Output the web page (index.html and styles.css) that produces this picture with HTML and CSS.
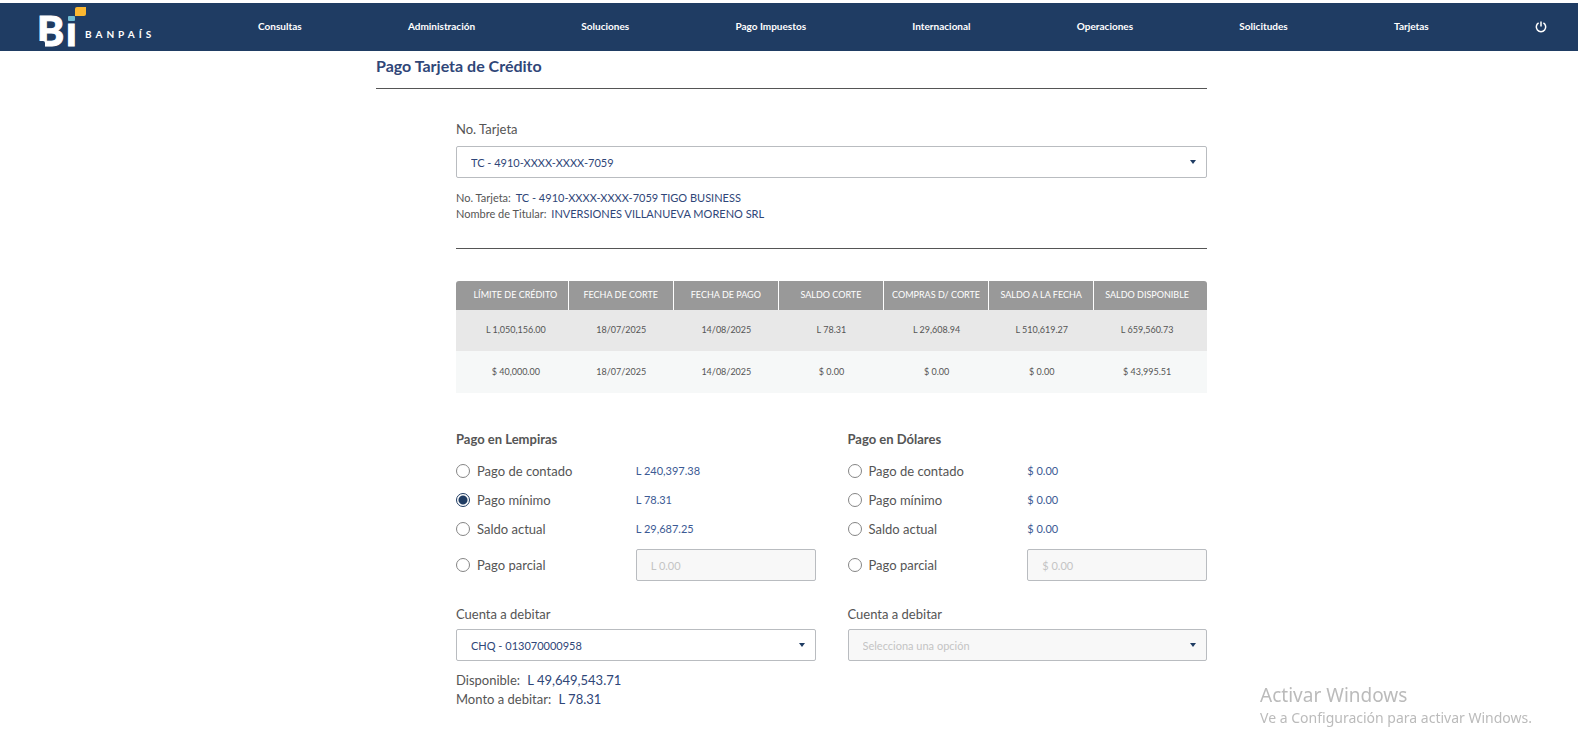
FILE: index.html
```
<!DOCTYPE html>
<html lang="es">
<head>
  <meta charset="UTF-8">
  <meta name="viewport" content="width=device-width, initial-scale=1.0">
  <title>Pago Tarjeta de Crédito</title>
  <link rel="stylesheet" href="styles.css">
</head>
<body>
  <header class="topbar">
    <a class="logo" href="#" aria-label="Bi Banpaís">
      <svg width="120" height="48" viewBox="0 0 120 48">
        <text class="logo-mark" x="-2" y="43">B</text>
        <text class="logo-mark" x="27" y="43">ı</text>
        <path class="logo-notch" d="M-2 38h6q2 0 2 2v6h-8z"/>
        <rect class="logo-teal" x="29" y="13" width="7" height="5" rx="1"/>
        <path class="logo-yellow" d="M38 4h9v7q0 2-2 2h-9V6q0-2 2-2z"/>
        <text class="logo-name" x="46" y="35">BANPAÍS</text>
      </svg>
    </a>
    <nav class="menu">
      <a href="#">Consultas</a>
      <a href="#">Administración</a>
      <a href="#">Soluciones</a>
      <a href="#">Pago Impuestos</a>
      <a href="#">Internacional</a>
      <a href="#">Operaciones</a>
      <a href="#">Solicitudes</a>
      <a href="#">Tarjetas</a>
      <button class="logout" type="button" aria-label="Salir">
        <svg width="12" height="12" viewBox="0 0 12 12"><path d="M3.6 1.9a4.7 4.7 0 1 0 4.8 0M6 .5v5"/></svg>
      </button>
    </nav>
  </header>

  <main class="page">
    <h1>Pago Tarjeta de Crédito</h1>
    <form class="content">
      <label class="field-label" for="tarjeta">No. Tarjeta</label>
      <div class="select">
        <select id="tarjeta"><option>TC - 4910-XXXX-XXXX-7059</option></select>
      </div>
      <div class="card-info">
        <p>No. Tarjeta: <span>TC - 4910-XXXX-XXXX-7059 TIGO BUSINESS</span></p>
        <p>Nombre de Titular: <span>INVERSIONES VILLANUEVA MORENO SRL</span></p>
      </div>

      <table class="balances">
        <thead>
          <tr>
            <th>LÍMITE DE CRÉDITO</th>
            <th>FECHA DE CORTE</th>
            <th>FECHA DE PAGO</th>
            <th>SALDO CORTE</th>
            <th>COMPRAS D/ CORTE</th>
            <th>SALDO A LA FECHA</th>
            <th>SALDO DISPONIBLE</th>
          </tr>
        </thead>
        <tbody>
          <tr>
            <td>L 1,050,156.00</td>
            <td>18/07/2025</td>
            <td>14/08/2025</td>
            <td>L 78.31</td>
            <td>L 29,608.94</td>
            <td>L 510,619.27</td>
            <td>L 659,560.73</td>
          </tr>
          <tr>
            <td>$ 40,000.00</td>
            <td>18/07/2025</td>
            <td>14/08/2025</td>
            <td>$ 0.00</td>
            <td>$ 0.00</td>
            <td>$ 0.00</td>
            <td>$ 43,995.51</td>
          </tr>
        </tbody>
      </table>

      <div class="payments">
        <section class="payment">
          <h2>Pago en Lempiras</h2>
          <div class="option">
            <label><input type="radio" name="lempiras">Pago de contado</label>
            <span class="amount">L 240,397.38</span>
          </div>
          <div class="option">
            <label><input type="radio" name="lempiras" checked>Pago mínimo</label>
            <span class="amount">L 78.31</span>
          </div>
          <div class="option">
            <label><input type="radio" name="lempiras">Saldo actual</label>
            <span class="amount">L 29,687.25</span>
          </div>
          <div class="option option-partial">
            <label><input type="radio" name="lempiras">Pago parcial</label>
            <input class="partial" type="text" placeholder="L 0.00" aria-label="Pago parcial en lempiras" disabled>
          </div>
          <label class="field-label" for="cuenta-lps">Cuenta a debitar</label>
          <div class="select">
            <select id="cuenta-lps"><option>CHQ - 013070000958</option></select>
          </div>
          <div class="account-info">
            <p>Disponible: <span>L 49,649,543.71</span></p>
            <p>Monto a debitar: <span>L 78.31</span></p>
          </div>
        </section>

        <section class="payment">
          <h2>Pago en Dólares</h2>
          <div class="option">
            <label><input type="radio" name="dolares">Pago de contado</label>
            <span class="amount">$ 0.00</span>
          </div>
          <div class="option">
            <label><input type="radio" name="dolares">Pago mínimo</label>
            <span class="amount">$ 0.00</span>
          </div>
          <div class="option">
            <label><input type="radio" name="dolares">Saldo actual</label>
            <span class="amount">$ 0.00</span>
          </div>
          <div class="option option-partial">
            <label><input type="radio" name="dolares">Pago parcial</label>
            <input class="partial" type="text" placeholder="$ 0.00" aria-label="Pago parcial en dólares" disabled>
          </div>
          <label class="field-label" for="cuenta-usd">Cuenta a debitar</label>
          <div class="select">
            <select id="cuenta-usd" disabled><option>Selecciona una opción</option></select>
          </div>
        </section>
      </div>
    </form>
  </main>

  <aside class="activation">
    <p class="activation-title">Activar Windows</p>
    <p>Ve a Configuración para activar Windows.</p>
  </aside>
</body>
</html>
```
FILE: styles.css
```
:root { --navy: #1f3c63; --blue: #2f4678; --text: #555; --line: #b9bcc0; }
* { box-sizing: border-box; }
body { margin: 0; padding-top: 3px; font-family: Lato, sans-serif; font-size: 13px; color: var(--text); background: #fff; }
p, h1, h2 { margin: 0; }

.topbar { display: flex; align-items: center; height: 48px; padding: 0 31px 0 39px; background: var(--navy); }
.logo { display: flex; flex: none; width: 120px; margin-right: 99px; }
.logo svg { overflow: visible; }
.logo-mark { font-size: 41px; font-weight: 900; fill: #fff; stroke: #fff; stroke-width: 1; }
.logo-name { font-size: 10px; font-weight: 700; letter-spacing: 4px; fill: #fff; }
.logo-notch { fill: var(--navy); }
.logo-teal { fill: #6fbcd3; }
.logo-yellow { fill: #fbb731; }
.menu { display: flex; flex: 1; align-items: center; justify-content: space-between; }
.menu a { padding-bottom: 2px; color: #fff; font-size: 10px; font-weight: 700; text-decoration: none; white-space: nowrap; }
.logout { display: flex; padding: 0; border: 0; background: none; cursor: pointer; }
.logout path { fill: none; stroke: #fff; stroke-width: 1.5; }

.page { max-width: 836px; margin: 0 auto; padding-left: 5px; }
h1 { padding: 4px 0 12px; border-bottom: 1px solid #555; font-size: 16px; line-height: 21px; font-weight: 700; color: var(--blue); }
.content { padding: 30px 0 32px 80px; }
.field-label { display: block; margin-bottom: 6px; line-height: 21px; }

.select { position: relative; }
.select::after { content: ''; position: absolute; top: 14px; right: 11px; border: solid transparent; border-width: 4px 3px 0; border-top-color: var(--navy); pointer-events: none; }
select, .partial { display: block; width: 100%; height: 32px; padding: 0 14px; border: 1px solid var(--line); border-radius: 2px; font-family: inherit; font-size: 11px; color: var(--blue); background: #fff; appearance: none; }
select:disabled, .partial:disabled { background: #f8f8f8; color: #c4c4c4; opacity: 1; }
.partial::placeholder { color: #c4c4c4; }

.card-info { padding: 12px 0 26px; border-bottom: 1px solid #555; font-size: 11px; line-height: 16px; }
.card-info span, .account-info span { color: var(--blue); }
.card-info span { margin-left: 2px; }

.balances { width: 100%; margin: 32px 0 36px; border-collapse: separate; border-spacing: 0; table-layout: fixed; font-size: 9px; text-align: center; }
.balances th { width: 14%; height: 29px; padding: 0 0 2px; background: #999; color: #fff; font-weight: 400; border-right: 1px solid #fff; white-space: nowrap; }
.balances td { height: 42px; padding: 0 0 2px; background: #f6f8f8; }
.balances tbody tr:first-child td { height: 41px; background: #e8e8e8; }
.balances th:first-child, .balances th:last-child { width: 15%; }
.balances th:first-child { border-top-left-radius: 3px; }
.balances th:last-child { border-right: 0; border-top-right-radius: 3px; }
.balances tr > :first-child { padding-left: 7px; }
.balances tr > :last-child { padding-right: 7px; }

.payments { display: grid; grid-template-columns: 1fr 1fr; gap: 32px; }
h2 { margin-bottom: 7px; font-size: 13px; line-height: 20px; font-weight: 700; }
.option { display: grid; grid-template-columns: 1fr 1fr; align-items: center; min-height: 29px; }
.option label { display: flex; align-items: center; gap: 7px; }
.option input[type="radio"] { width: 14px; height: 14px; margin: 0; border: 1px solid #858585; border-radius: 50%; background: #fff; appearance: none; }
.option input[type="radio"]:checked { border-color: var(--navy); background: radial-gradient(circle, var(--navy) 4px, #fff 5px); }
.amount { font-size: 11px; color: #3c5a94; }
.option-partial { margin: 6px 0 23px; }
.payment .field-label { margin-bottom: 4px; }
.account-info { padding-top: 10px; line-height: 19px; }
.account-info span { margin-left: 4px; }

/* system notice, pinned over the page */
.activation { position: fixed; right: 46px; bottom: 21px; font-family: "Noto Sans", sans-serif; font-size: 14px; line-height: 20px; color: #bbb; }
.activation-title { font-size: 19px; line-height: 26px; }
```
